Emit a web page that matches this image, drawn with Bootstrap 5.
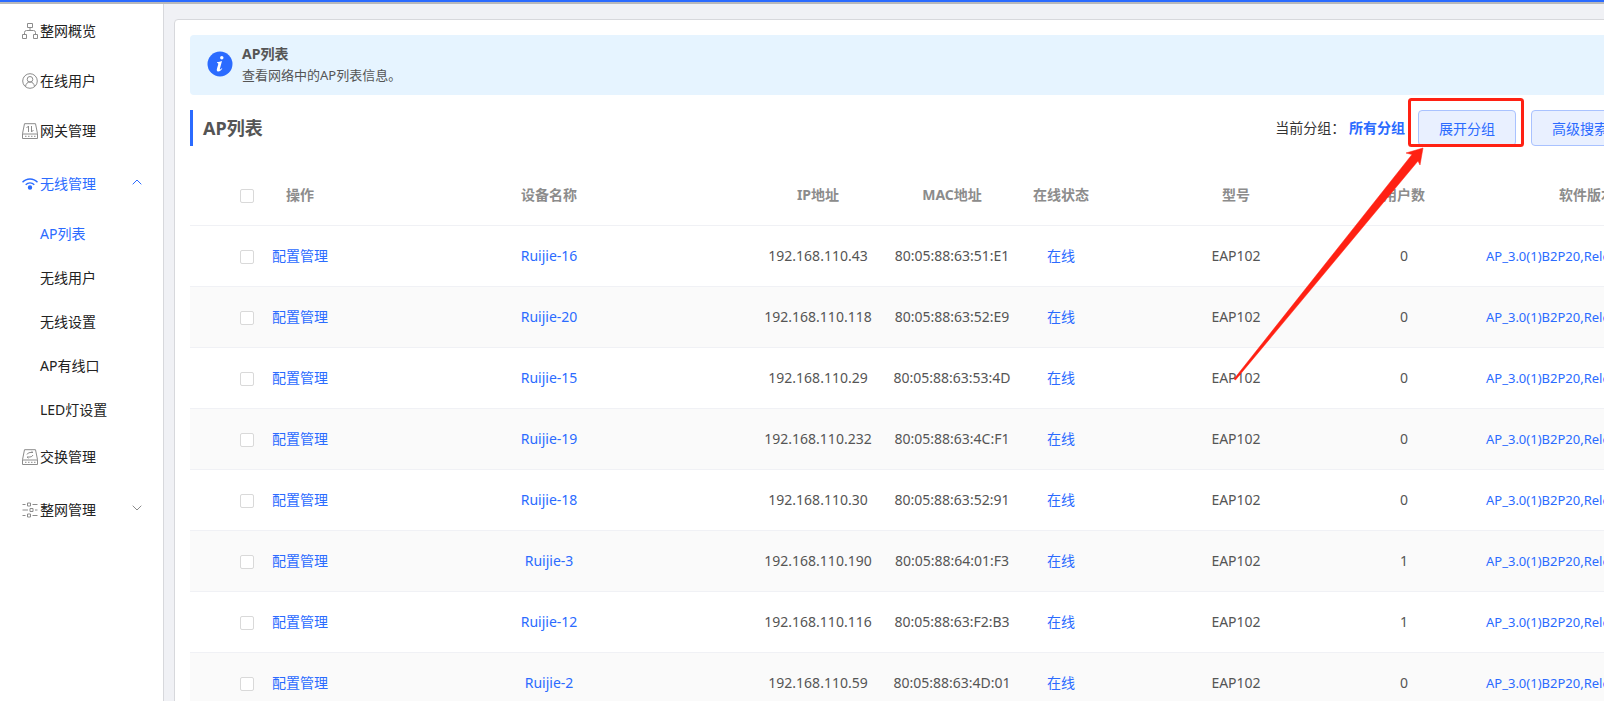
<!DOCTYPE html>
<html lang="zh-CN">
<head>
<meta charset="utf-8">
<meta name="viewport" content="width=device-width, initial-scale=1">
<title>AP列表</title>
<link href="https://cdn.jsdelivr.net/npm/bootstrap@5.3.0/dist/css/bootstrap.min.css" rel="stylesheet">
<style>
  :root { --brand: #2b6bff; }
  body { font: 14px/20px "Noto Sans", "Noto Sans CJK SC", sans-serif; color: #555; background: #f0f1f5; }
  a { color: var(--brand); text-decoration: none; }
  .topline { height: 4px; background: var(--brand); border-bottom: 2px solid #b9b9bb; }
  .shell { height: calc(100vh - 4px); }
  .side { width: 164px; background: #fff; border-right: 1px solid #d7d8dc; padding-top: 2px; }
  .side a { height: 50px; padding-left: 22px; color: #222; }
  .side a.parent { height: 56px; padding-right: 21px; }
  .side a.sub { height: 44px; padding-left: 40px; }
  .side a.on { color: var(--brand); }
  .side svg { flex: none; color: #8c8c8c; }
  .side a.on svg { color: var(--brand); }
  .side .ico { margin-right: 2px; }
  .side .chev { margin: 0 0 4px auto; }
  .content-area { padding: 15px 0 0 10px; }
  .panel { width: calc(100% + 158px); background: #fff; border: 1px solid #d7d8dc; border-radius: 4px; padding: 15px; }
  .tip { height: 60px; background: #e6f4ff; border-radius: 4px; padding: 0 17px 3px; gap: 9px; }
  .tip strong { line-height: 22px; display: block; }
  .tip p { font-size: 13px; }
  .tools { margin: 15px 0 20px; padding-right: 117px; height: 36px; }
  .tools h1 { border-left: 3px solid var(--brand); padding-left: 10px; font-size: 18px; line-height: 36px; font-weight: 700; }
  .tools .now { color: #333; margin-right: 13px; }
  .btn-soft { --bs-btn-color: var(--brand); --bs-btn-bg: #e9f0ff; --bs-btn-border-color: #a9c2ff; --bs-btn-hover-color: var(--brand); --bs-btn-hover-bg: #dce7ff; --bs-btn-font-size: 14px; --bs-btn-border-radius: 4px; width: 98px; height: 36px; padding: 0; }
  .hot + .btn-soft { margin-left: 15px; }
  .hot { position: relative; }
  .hot svg { position: absolute; left: -189px; top: -18px; pointer-events: none; z-index: 3; }
  .ap { table-layout: fixed; width: 100%; text-align: center; white-space: nowrap; }
  .ap th { height: 59px; color: #8c8c8c; font-weight: 700; }
  .ap td { height: 61px; }
  .ap th, .ap td { padding: 0; border-bottom: 1px solid #f0f1f5; }
  .ap tbody tr:nth-child(even) { background: #fafafa; }
  .ap th:first-child, .ap td:first-child { text-align: left; padding-left: 50px; }
  .ap td:last-child { text-align: left; padding-left: 58px; font-size: 13px; }
  .ap .form-check-input { width: 14px; height: 14px; margin: 2px 0 0; border: 1px solid #d9d9d9; border-radius: 2px; display: block; }
  .c-check { width: 74px; } .c-act { width: 72px; } .c-ip { width: 112px; } .c-mac { width: 156px; }
  .c-state { width: 62px; } .c-model { width: 288px; } .c-users { width: 48px; } .c-ver { width: 318px; }
</style>
</head>
<body class="overflow-hidden">
<div class="topline"></div>
<div class="shell d-flex">
  <nav class="side d-flex flex-column flex-shrink-0" aria-label="主菜单">
    <a href="#" class="d-flex align-items-center"><svg class="ico" width="16" height="16" viewBox="0 0 16 16" fill="none" stroke="currentColor"><path d="M5.500.5h5v4h-5zM.5 11.500h4v4h-4zM11.500 11.500h4v4h-4zM8 4.500v3M2.500 11.500v-2q0-2 2-2h7q2 0 2 2v2"/></svg>整网概览</a>
    <a href="#" class="d-flex align-items-center"><svg class="ico" width="16" height="16" viewBox="0 0 16 16" fill="none" stroke="currentColor"><circle cx="8" cy="8" r="7.300"/><circle cx="8" cy="6.300" r="2.800"/><path d="M3.500 13.500C4 10.500 5.500 9 8 9s4 1.500 4.500 4.500"/></svg>在线用户</a>
    <a href="#" class="d-flex align-items-center"><svg class="ico" width="16" height="16" viewBox="0 0 16 16" fill="none" stroke="currentColor"><path d="M2.500.7h11l2 10v4.800H.5v-4.800zM.5 11h15M3 13.300h1.500M6 13.300h1.500M9 13.300h1.500M12 13.300h1.500M6.500 9V3L4.500 5M9.500 3v6l2-2"/></svg>网关管理</a>
    <a href="#" class="parent on d-flex align-items-center"><svg class="ico" width="16" height="16" viewBox="0 0 16 16" fill="none" stroke="currentColor" stroke-width="1.400"><path d="M.5 6.300C4.500 1.900 11.500 1.900 15.500 6.300M3.700 8.700c2.400-2.500 6.200-2.500 8.600 0"/><circle cx="8" cy="11.500" r="1.500" fill="currentColor"/></svg>无线管理<svg class="chev" width="10" height="6" viewBox="0 0 10 6" fill="none" stroke="currentColor"><path d="M.7 5.300 5 1l4.300 4.300"/></svg></a>
    <a href="#" class="sub on d-flex align-items-center" aria-current="page">AP列表</a>
    <a href="#" class="sub d-flex align-items-center">无线用户</a>
    <a href="#" class="sub d-flex align-items-center">无线设置</a>
    <a href="#" class="sub d-flex align-items-center">AP有线口</a>
    <a href="#" class="sub d-flex align-items-center">LED灯设置</a>
    <a href="#" class="d-flex align-items-center"><svg class="ico" width="16" height="16" viewBox="0 0 16 16" fill="none" stroke="currentColor"><path d="M2.500.7h11l2 10v4.800H.5v-4.800zM.5 11h15M3 13.300h1.500M6 13.300h1.500M9 13.300h1.500M12 13.300h1.500M5 5.500q1-2 3-2h3L9.500 2.300M11 6q-1 2-3 2H5l1.500 1.200"/></svg>交换管理</a>
    <a href="#" class="parent d-flex align-items-center"><svg class="ico" width="16" height="16" viewBox="0 0 16 16" fill="none" stroke="currentColor"><path d="M5.500 1h3v3h-3zM8 6.500h3v3H8zM5.500 12h3v3h-3zM.5 2.500h3M10.500 2.500h5M.5 8H6M13 8h2.500M.5 13.500h3M10.500 13.500h5"/></svg>整网管理<svg class="chev" width="10" height="6" viewBox="0 0 10 6" fill="none" stroke="currentColor"><path d="M.7.7 5 5 9.300.7"/></svg></a>
  </nav>
  <main class="content-area flex-grow-1 overflow-hidden">
    <div class="panel">
      <div class="tip d-flex align-items-center">
        <svg width="26" height="26" viewBox="0 0 26 26"><circle cx="13" cy="13" r="12.500" fill="#2b6bff"/><circle cx="14.800" cy="6.700" r="1.700" fill="#fff"/><path d="M10 11.200q2.500-.5 5-1.200l-2.200 8q-.3 1.300 2-.8l.5.500q-2.300 3-4.300 2.800-1.800-.3-1-3l1.300-4.600q.2-.9-1.300-1z" fill="#fff"/></svg>
        <div><strong>AP列表</strong><p class="mb-0">查看网络中的AP列表信息。</p></div>
      </div>
      <div class="tools d-flex align-items-center">
        <h1 class="mb-0 me-auto">AP列表</h1>
        <span class="now">当前分组： <a href="#" class="fw-bold">所有分组</a></span>
        <div class="hot">
          <button type="button" class="btn btn-soft">展开分组</button>
          <svg width="300" height="300" viewBox="0 0 300 300" aria-hidden="true"><rect x="180.500" y="7.500" width="113" height="46" rx="2" fill="none" stroke="#ff2113" stroke-width="3"/><path d="M5 287 183 62.500 177 61 194 56 191 73 189 69 6.500 288z" fill="#ff2113" stroke="#ff2113" stroke-width=".5"/></svg>
        </div>
        <button type="button" class="btn btn-soft">高级搜索</button>
      </div>
      <table class="ap">
        <colgroup><col class="c-check"><col class="c-act"><col><col class="c-ip"><col class="c-mac"><col class="c-state"><col class="c-model"><col class="c-users"><col class="c-ver"></colgroup>
        <thead><tr><th><input class="form-check-input" type="checkbox" aria-label="全选"></th><th>操作</th><th>设备名称</th><th>IP地址</th><th>MAC地址</th><th>在线状态</th><th>型号</th><th>用户数</th><th>软件版本</th></tr></thead>
        <tbody id="rows"></tbody>
      </table>
    </div>
  </main>
</div>
<script src="https://cdn.jsdelivr.net/npm/bootstrap@5.3.0/dist/js/bootstrap.bundle.min.js"></script>
<script>
  const devices = [
    ["Ruijie-16", "192.168.110.43", "80:05:88:63:51:E1", 0],
    ["Ruijie-20", "192.168.110.118", "80:05:88:63:52:E9", 0],
    ["Ruijie-15", "192.168.110.29", "80:05:88:63:53:4D", 0],
    ["Ruijie-19", "192.168.110.232", "80:05:88:63:4C:F1", 0],
    ["Ruijie-18", "192.168.110.30", "80:05:88:63:52:91", 0],
    ["Ruijie-3", "192.168.110.190", "80:05:88:64:01:F3", 1],
    ["Ruijie-12", "192.168.110.116", "80:05:88:63:F2:B3", 1],
    ["Ruijie-2", "192.168.110.59", "80:05:88:63:4D:01", 0]
  ];
  document.getElementById("rows").innerHTML = devices.map(([name, ip, mac, users]) => `<tr>
    <td><input class="form-check-input" type="checkbox" aria-label="${name}"></td>
    <td><a href="#">配置管理</a></td><td><a href="#">${name}</a></td><td>${ip}</td><td>${mac}</td>
    <td><a href="#">在线</a></td><td>EAP102</td><td>${users}</td><td><a href="#">AP_3.0(1)B2P20,Release</a></td></tr>`).join("");
</script>
</body>
</html>
